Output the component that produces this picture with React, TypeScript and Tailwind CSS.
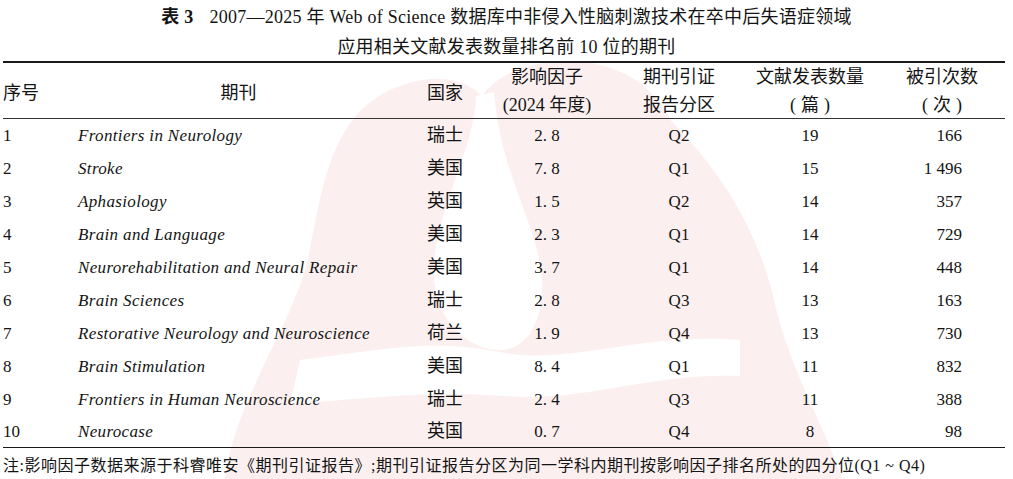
import React from "react";

const rows: [string, string, string, string, string, string, string][] = [
  ["1", "Frontiers in Neurology", "瑞士", "2. 8", "Q2", "19", "166"],
  ["2", "Stroke", "美国", "7. 8", "Q1", "15", "1 496"],
  ["3", "Aphasiology", "英国", "1. 5", "Q2", "14", "357"],
  ["4", "Brain and Language", "美国", "2. 3", "Q1", "14", "729"],
  ["5", "Neurorehabilitation and Neural Repair", "美国", "3. 7", "Q1", "14", "448"],
  ["6", "Brain Sciences", "瑞士", "2. 8", "Q3", "13", "163"],
  ["7", "Restorative Neurology and Neuroscience", "荷兰", "1. 9", "Q4", "13", "730"],
  ["8", "Brain Stimulation", "美国", "8. 4", "Q1", "11", "832"],
  ["9", "Frontiers in Human Neuroscience", "瑞士", "2. 4", "Q3", "11", "388"],
  ["10", "Neurocase", "英国", "0. 7", "Q4", "8", "98"],
];

const grid = "grid grid-cols-[75px_349px_70px_100px_164px_98px_146px]";

function Watermark() {
  return (
    <svg
      className="absolute left-0 top-0 pointer-events-none"
      width="1013"
      height="479"
      viewBox="0 0 1013 479"
    >
      <path
        d="M225 479 C235 400 290 330 308 260 C322 190 330 110 400 86 C440 72 466 80 482 96 C500 70 540 58 585 62 C640 70 660 100 672 122 C720 170 758 230 774 300 C790 370 822 420 842 479 Z"
        fill="#fbf0ef"
      />
      <path
        d="M476 96 C474 150 440 200 434 262 C430 320 468 350 500 350 C532 350 546 312 541 270 C535 222 500 170 494 92 Z"
        fill="#ffffff"
      />
      <path
        d="M300 360 C380 350 430 338 500 352 C570 366 640 332 740 340 L740 376 C650 372 590 402 505 396 C430 390 370 398 290 404 Z"
        fill="#ffffff"
      />
    </svg>
  );
}

function Paren({ children }: { children: React.ReactNode }) {
  return (
    <span>
      (<span className="mx-[5px]">{children}</span>)
    </span>
  );
}

export default function App() {
  const cjk = "font-['Liberation_Serif','Noto_Sans_CJK_SC',serif]";
  return (
    <div
      className={`relative w-[1013px] h-[479px] bg-white text-[#141414] overflow-hidden ${cjk}`}
    >
      <Watermark />
      <div className="relative flex flex-col">
        <div className="flex flex-col items-center pt-[2px] text-[18px] leading-[30px] whitespace-nowrap tracking-[0.25px]">
          <div>
            <span className="font-bold">表 3</span>
            <span className="inline-block w-[16px]" />
            2007—2025 年 Web of Science 数据库中非侵入性脑刺激技术在卒中后失语症领域
          </div>
          <div>应用相关文献发表数量排名前 10 位的期刊</div>
        </div>

        <div className="mx-[3px] mt-[-1px] w-[1002px] border-t-2 border-[#1a1a1a]" />

        <div
          className={`${grid} mx-[3px] h-[55px] items-center text-[18px] leading-[28px] whitespace-nowrap`}
        >
          <div className="pt-[3px]">序号</div>
          <div className="text-center pr-[28px] pt-[3px]">期刊</div>
          <div className="pt-[3px]">国家</div>
          <div className="flex flex-col items-center">
            <span>影响因子</span>
            <span>(2024 年度)</span>
          </div>
          <div className="flex flex-col items-center">
            <span>期刊引证</span>
            <span>报告分区</span>
          </div>
          <div className="flex flex-col items-center">
            <span>文献发表数量</span>
            <Paren>篇</Paren>
          </div>
          <div className="flex flex-col items-center pl-[20px]">
            <span>被引次数</span>
            <Paren>次</Paren>
          </div>
        </div>

        <div className="mx-[3px] w-[1002px] border-t border-[#333]" />

        <div className="mx-[3px] flex flex-col">
          {rows.map((r, i) => (
            <div
              key={r[0]}
              className={`${grid} items-center text-[17px] whitespace-nowrap ${
                i === rows.length - 1 ? "h-[31px]" : "h-[33px]"
              }`}
            >
              <div>{r[0]}</div>
              <div className="italic tracking-[0.35px]">{r[1]}</div>
              <div className="text-[18px]">{r[2]}</div>
              <div className="text-center">{r[3]}</div>
              <div className="text-center">{r[4]}</div>
              <div className="text-center">{r[5]}</div>
              <div className="text-right pr-[43px]">{r[6]}</div>
            </div>
          ))}
        </div>

        <div className="mx-[3px] w-[1002px] border-t-[1.5px] border-[#1a1a1a]" />

        <div className="mx-[3px] mt-[8px] text-[16px] leading-[20px] tracking-[0.5px] whitespace-nowrap">
          注:影响因子数据来源于科睿唯安《期刊引证报告》;期刊引证报告分区为同一学科内期刊按影响因子排名所处的四分位(Q1 ~ Q4)
        </div>
      </div>
    </div>
  );
}
